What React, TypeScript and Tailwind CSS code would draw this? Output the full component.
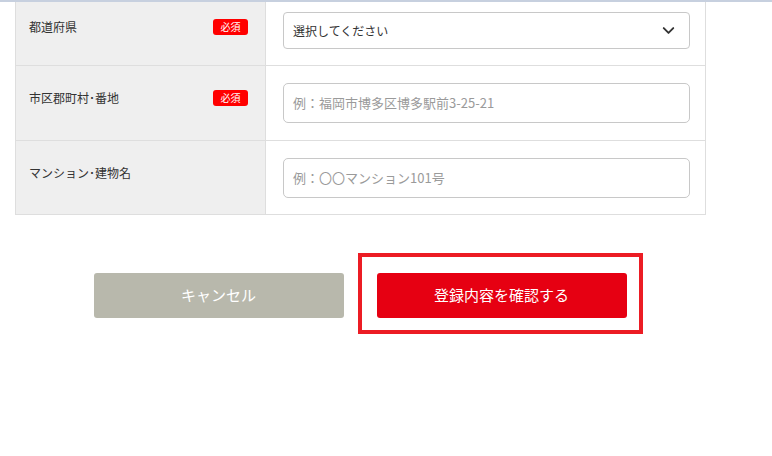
import { ChevronDown } from "lucide-react";

const font = "font-['Noto_Sans_CJK_JP','Noto_Sans',sans-serif]";

const rows = [
  {
    id: 1,
    label: "都道府県",
    required: true,
    kind: "select",
    text: "選択してください",
  },
  {
    id: 2,
    label: "市区郡町村･番地",
    required: true,
    kind: "input",
    text: "例：福岡市博多区博多駅前3-25-21",
  },
  {
    id: 3,
    label: "マンション･建物名",
    required: false,
    kind: "input",
    text: "例：〇〇マンション101号",
  },
];

const App = () => {
  return (
    <div className={`w-[772px] h-[456px] bg-white overflow-hidden ${font}`}>
      <div className="h-[2px] bg-[#c7d0df]" />

      <div className="ml-[15px] w-[691px] border-x border-[#dedede]">
        {rows.map((row, i) => (
          <div key={row.id} className="flex border-b border-[#dedede]">
            <div
              className={`w-[250px] shrink-0 bg-[#efefef] border-r border-[#dedede] pl-[13px] pr-[17px] flex items-start justify-between ${
                i === 0 ? "pt-[16px]" : "pt-[23px]"
              }`}
            >
              <span className="text-[12px] leading-[18px] text-[#333]">{row.label}</span>
              {row.required && (
                <span className="mt-[1px] w-[35px] h-[16px] rounded-[3px] bg-[#ff0000] text-white text-[10px] leading-[16px] text-center">
                  必須
                </span>
              )}
            </div>
            <div
              className={`flex-1 pl-[17px] pr-[15px] ${
                i === 0 ? "pt-[10px] pb-[16px]" : i === 1 ? "py-[17px]" : "pt-[17px] pb-[16px]"
              }`}
            >
              {row.kind === "select" ? (
                <div className="h-[37px] rounded-[4px] border border-[#c8c8c8] flex items-center justify-between pl-[9px] pr-[11px]">
                  <span className="text-[12px] text-[#333]">{row.text}</span>
                  <ChevronDown className="w-[19px] h-[19px] text-[#333]" strokeWidth={2.4} />
                </div>
              ) : (
                <div className="h-[40px] rounded-[5px] border border-[#c8c8c8] flex items-center pl-[9px]">
                  <span className="text-[13px] text-[#9a9a9a]">{row.text}</span>
                </div>
              )}
            </div>
          </div>
        ))}
      </div>

      <div className="mt-[58px] w-[720px] flex justify-center gap-[33px]">
        <button className="w-[250px] h-[45px] rounded-[3px] bg-[#b8b8ac] text-white text-[15px]">
          キャンセル
        </button>
        <div className="relative">
          <button className="w-[250px] h-[45px] rounded-[3px] bg-[#e60012] text-white text-[15px]">
            登録内容を確認する
          </button>
          <div className="absolute -left-[19px] -right-[16px] -top-[20px] -bottom-[16px] border-4 border-[#ec1c24] pointer-events-none" />
        </div>
      </div>
    </div>
  );
};

export default App;
